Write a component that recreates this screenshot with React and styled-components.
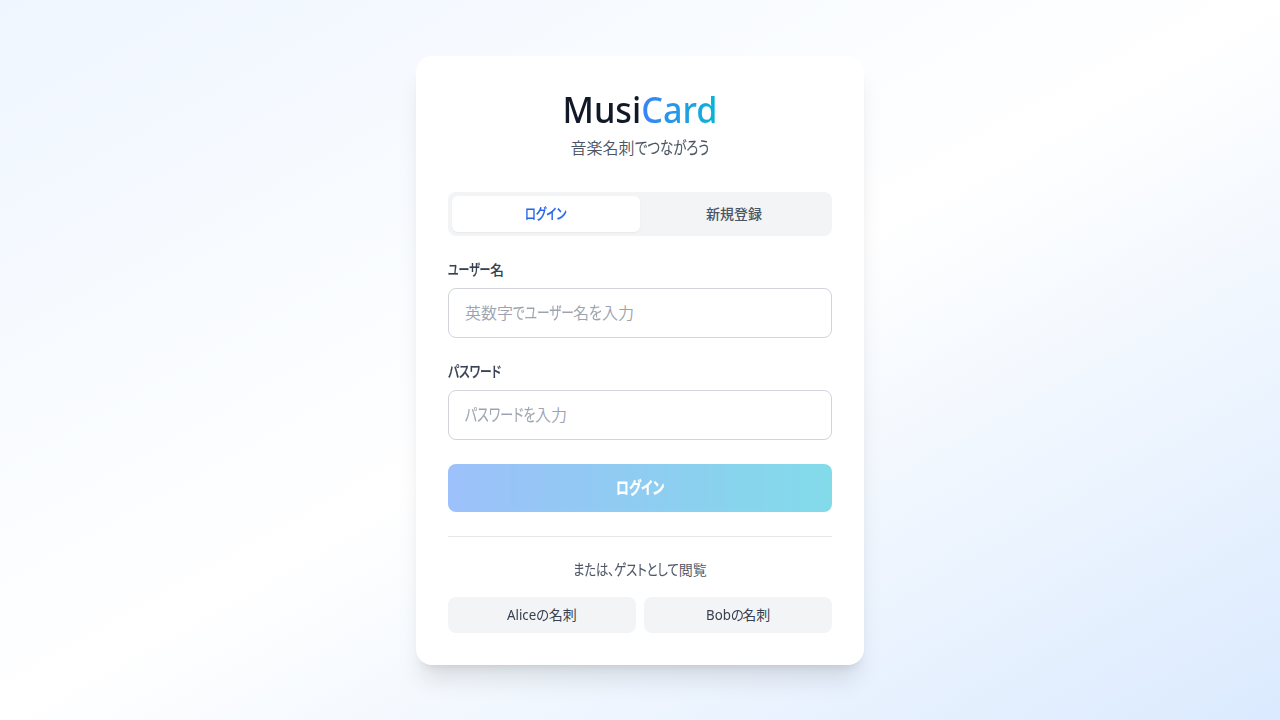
import React, { useState } from 'react';
import styled, { createGlobalStyle, css } from 'styled-components';

const GlobalStyle = createGlobalStyle`
  *, *::before, *::after { box-sizing: border-box; }
  body { margin: 0; }
  body, button, input {
    font-family: "Noto Sans", "Noto Sans CJK JP", sans-serif;
    font-feature-settings: "palt";
  }
  button { border: 0; padding: 0; cursor: pointer; }
`;

const Page = styled.main`
  min-height: 100vh;
  display: flex;
  align-items: center;
  justify-content: center;
  padding: 16px;
  background: linear-gradient(to bottom right, #eff6ff, #ffffff, #dbeafe);
`;

const Card = styled.section`
  width: 448px;
  padding: 32px;
  border-radius: 16px;
  background: #ffffff;
  box-shadow: 0 20px 25px -5px rgba(0, 0, 0, 0.1), 0 8px 10px -6px rgba(0, 0, 0, 0.1);
`;

const Header = styled.header`
  margin-bottom: 32px;
  text-align: center;
`;

const Title = styled.h1`
  margin: 0 0 5px;
  padding-top: 1px;
  font-size: 36px;
  line-height: 42px;
  font-weight: 550;
  color: #111827;
  transform: scaleX(0.95);
`;

const Accent = styled.span`
  color: transparent;
  background: linear-gradient(to right, #3b82f6, #06b6d4);
  background-clip: text;
  -webkit-background-clip: text;
`;

/* A run of condensed glyphs: $w is the advance it takes, $s its horizontal scale, $v its vertical one. */
const Narrow = styled.span`
  display: inline-block;
  width: ${(p) => p.$w}px;
  white-space: nowrap;
  text-align: left;
  transform: scale(${(p) => p.$s}, ${(p) => p.$v || 1.07});
  transform-origin: left 70%;
  -webkit-text-stroke: ${(p) => (p.$v ? 0 : 0.2)}px currentColor;
`;

const Tagline = styled.p`
  margin: 0;
  font-size: 16px;
  line-height: 24px;
  font-weight: 350;
  color: #4b5563;
`;

const Tabs = styled.div`
  display: flex;
  padding: 4px;
  margin-bottom: 24px;
  border-radius: 8px;
  background: #f3f4f6;
`;

const Tab = styled.button`
  flex: 1;
  height: 36px;
  border-radius: 6px;
  font-size: 14px;
  line-height: 20px;
  font-weight: 500;
  color: #4b5563;
  background: transparent;
  ${(p) => p.$active && css`
    color: #2563eb;
    background: #ffffff;
    box-shadow: 0 1px 2px rgba(0, 0, 0, 0.05);
  `}
`;

const Form = styled.form`
  display: flex;
  flex-direction: column;
  gap: 24px;
`;

const FieldLabel = styled.label`
  display: block;
  margin-bottom: 8px;
  font-size: 14px;
  line-height: 20px;
  font-weight: 500;
  color: #374151;
`;

const InputBox = styled.div`
  position: relative;
`;

const Input = styled.input`
  display: block;
  width: 100%;
  height: 50px;
  padding: 12px 16px;
  border: 1px solid #d1d5db;
  border-radius: 8px;
  background: #ffffff;
  font-size: 16px;
  line-height: 24px;
  color: #111827;
  outline: none;
  &:focus { border-color: #3b82f6; }
  &:not(:placeholder-shown) + span { display: none; }
`;

const Hint = styled.span`
  position: absolute;
  left: 17px;
  top: 13px;
  font-size: 16px;
  line-height: 24px;
  font-weight: 350;
  white-space: nowrap;
  color: #9ca3af;
  pointer-events: none;
`;

const Submit = styled.button`
  height: 48px;
  border-radius: 8px;
  background: linear-gradient(to right, #3b82f6, #06b6d4);
  color: #ffffff;
  font-size: 16px;
  line-height: 24px;
  font-weight: 600;
  opacity: 0.5;
`;

const Guest = styled.div`
  margin-top: 24px;
  padding-top: 24px;
  border-top: 1px solid #e5e7eb;
`;

const GuestText = styled.p`
  height: 20px;
  margin: 0 0 16px;
  text-align: center;
  font-size: 14px;
  line-height: 18px;
  font-weight: 350;
  color: #4b5563;
`;

const GuestRow = styled.div`
  display: flex;
  gap: 8px;
`;

const GuestButton = styled.button`
  flex: 1;
  height: 36px;
  border-radius: 8px;
  background: #f3f4f6;
  color: #374151;
  font-size: 14px;
  line-height: 20px;
  font-weight: 400;
`;

export default function App() {
  const [tab, setTab] = useState('login');
  return (
    <>
      <GlobalStyle />
      <Page>
        <Card>
          <Header>
            <Title>Musi<Accent>Card</Accent></Title>
            <Tagline>音楽名刺<Narrow $w={75} $s={0.84}>でつながろう</Narrow></Tagline>
          </Header>
          <Tabs>
            <Tab type="button" $active={tab === 'login'} onClick={() => setTab('login')}>
              <Narrow $w={42} $s={0.81}>ログイン</Narrow>
            </Tab>
            <Tab type="button" $active={tab === 'register'} onClick={() => setTab('register')}>
              新規登録
            </Tab>
          </Tabs>
          <Form onSubmit={(e) => e.preventDefault()}>
            <div>
              <FieldLabel htmlFor="username"><Narrow $w={42} $s={0.78}>ユーザー</Narrow>名</FieldLabel>
              <InputBox>
                <Input id="username" type="text" placeholder=" " />
                <Hint>
                  英数字<Narrow $w={60} $s={0.79}>でユーザー</Narrow>名<Narrow $w={13} $s={0.88}>を</Narrow>入力
                </Hint>
              </InputBox>
            </div>
            <div>
              <FieldLabel htmlFor="password"><Narrow $w={53} $s={0.84}>パスワード</Narrow></FieldLabel>
              <InputBox>
                <Input id="password" type="password" placeholder=" " />
                <Hint><Narrow $w={70} $s={0.81}>パスワードを</Narrow>入力</Hint>
              </InputBox>
            </div>
            <Submit type="submit"><Narrow $w={48} $s={0.8}>ログイン</Narrow></Submit>
          </Form>
          <Guest>
            <GuestText><Narrow $w={105.5} $s={0.875}>または、ゲストとして</Narrow>閲覧</GuestText>
            <GuestRow>
              <GuestButton type="button"><Narrow $w={41.5} $s={0.95} $v={1}>Aliceの</Narrow>名刺</GuestButton>
              <GuestButton type="button"><Narrow $w={36.5} $s={0.95} $v={1}>Bobの</Narrow>名刺</GuestButton>
            </GuestRow>
          </Guest>
        </Card>
      </Page>
    </>
  );
}
